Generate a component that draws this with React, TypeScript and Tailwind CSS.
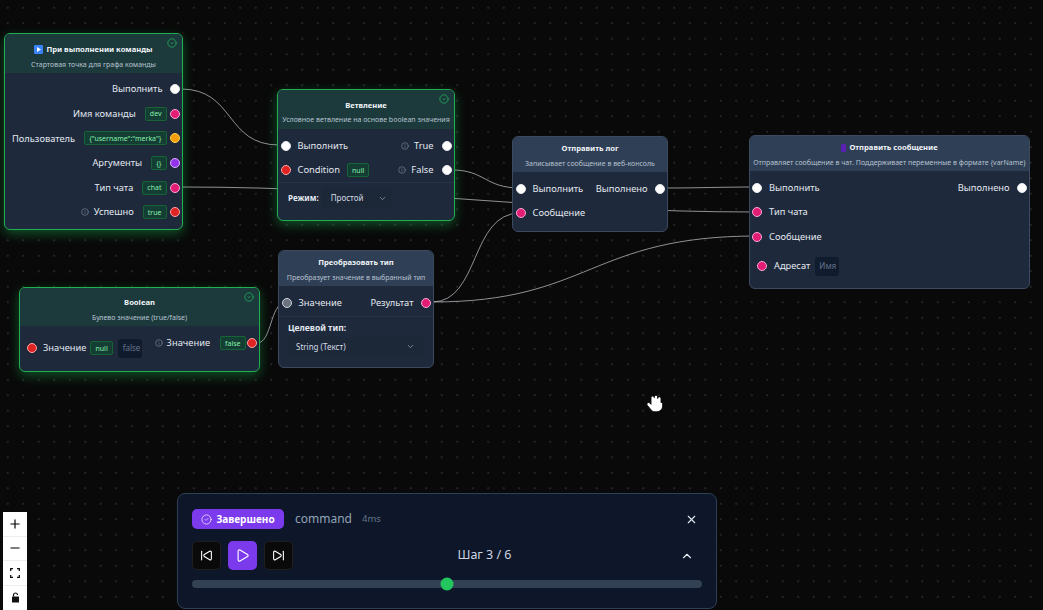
import React from 'react';
import { ChevronDown, ChevronUp, CircleCheck, Info, Minus, Play, Plus, SkipBack, SkipForward, X } from 'lucide-react';

const WHITE = 'bg-white border-[#e5e7eb]';
const PINK = 'bg-[#e11d74] border-[#f9a8d4]';
const RED = 'bg-[#e02424] border-[#fca5a5]';
const ORANGE = 'bg-[#f59e0b] border-[#fcd34d]';
const PURPLE = 'bg-[#9333ea] border-[#d8b4fe]';
const GRAY = 'bg-[#6b7280] border-[#d1d5db]';

const Dot = ({ color }: { color: string }) => (
    <span className={`block w-[10px] h-[10px] rounded-full border shrink-0 ${color}`} />
);

const Pill = ({ children }: { children: React.ReactNode }) => (
    <span className="flex items-center h-[14px] px-[4px] rounded-[2px] bg-[#143d33] border border-[#166534] text-[#86efac] text-[7px] leading-none whitespace-nowrap">
        {children}
    </span>
);

const Tip = () => <Info size={8} strokeWidth={1.5} className="text-[#94a3b8] shrink-0" />;

const Header = ({ title, desc, icon, success, h }: { title: string; desc: string; icon?: React.ReactNode; success?: boolean; h: string }) => (
    <div className={`relative flex flex-col items-center justify-center gap-[7px] rounded-t-[5px] ${h} ${success ? 'bg-[#1c3a3c]' : 'bg-[#2f3f55]'}`}>
        {success && <CircleCheck size={10} strokeWidth={1.6} className="absolute right-[5px] top-[4px] text-[#22c55e]" />}
        <div className="flex items-center gap-[3px] text-[7.6px] leading-none font-bold text-[#f1f5f9] whitespace-nowrap">
            {icon}
            {title}
        </div>
        <div className="text-[7px] leading-none text-[#b6c2d1] whitespace-nowrap">{desc}</div>
    </div>
);

const Node = ({ pos, success, children }: { pos: string; success?: boolean; children: React.ReactNode }) => (
    <div className={`absolute rounded-md bg-[#1e293b] border ${pos} ${success ? 'border-[#1fb052] shadow-[0_4px_12px_rgba(34,197,94,0.38)]' : 'border-[#3b4a5f]'}`}>
        {children}
    </div>
);

const Row = ({ className = '', children }: { className?: string; children: React.ReactNode }) => (
    <div className={`flex items-center h-[24.6px] text-[9.3px] text-[#e2e8f0] whitespace-nowrap ${className}`}>{children}</div>
);

const Edges = () => (
    <svg className="absolute inset-0 w-full h-full" viewBox="0 0 1043 610" fill="none" stroke="#c7ccd3" strokeWidth="0.7">
        <path d="M181 89 C 235 89, 225 145, 279 145" />
        <path d="M181 187 C 400 187, 540 212, 757 212" />
        <path d="M452 170 C 485 170, 485 188, 520 188" />
        <path d="M665 188 C 700 188, 720 187, 757 187" />
        <path d="M432 302 C 480 302, 470 213, 520 213" />
        <path d="M432 302 C 590 302, 590 236, 757 236" />
        <path d="M257 343 C 272 343, 270 303, 285 303" />
    </svg>
);

export default function App() {
    return (
        <div className="relative w-[1043px] h-[610px] overflow-hidden bg-[#090909] bg-[radial-gradient(#262626_0.7px,transparent_0.7px)] bg-[size:15.5px_15.5px] font-['Noto_Sans',sans-serif]">
            <Edges />

            {/* Start node */}
            <Node pos="left-[4px] top-[33px] w-[179px] h-[197px]" success>
                <Header
                    h="h-[39px] pt-[6px]"
                    success
                    title="При выполнении команды"
                    desc="Стартовая точка для графа команды"
                    icon={
                        <svg width="9" height="9" viewBox="0 0 9 9">
                            <rect width="9" height="9" rx="1" fill="#3b82f6" />
                            <path d="M3 2 L7 4.5 L3 7 Z" fill="#fff" />
                        </svg>
                    }
                />
                <div className="pt-[4px] pr-[2.5px] flex flex-col items-end">
                    <Row className="gap-[7px]">Выполнить <Dot color={WHITE} /></Row>
                    <Row className="gap-[3px]"><span className="mr-[6px]">Имя команды</span><Pill>dev</Pill><Dot color={PINK} /></Row>
                    <Row className="gap-[3px]"><span className="mr-[6px]">Пользователь</span><Pill>{'{"username":"merka"}'}</Pill><Dot color={ORANGE} /></Row>
                    <Row className="gap-[3px]"><span className="mr-[6px]">Аргументы</span><Pill>{'{}'}</Pill><Dot color={PURPLE} /></Row>
                    <Row className="gap-[3px]"><span className="mr-[6px]">Тип чата</span><Pill>chat</Pill><Dot color={PINK} /></Row>
                    <Row className="gap-[3px]"><Tip /><span className="ml-[2px] mr-[6px]">Успешно</span><Pill>true</Pill><Dot color={RED} /></Row>
                </div>
            </Node>

            {/* Branch node */}
            <Node pos="left-[277px] top-[89px] w-[178px] h-[132px]" success>
                <Header h="h-[39px] pt-[6px]" success title="Ветвление" desc="Условное ветвление на основе boolean значения" />
                <div className="pt-[4.5px] px-[2.5px]">
                    <Row className="justify-between">
                        <span className="flex items-center gap-[7px]"><Dot color={WHITE} />Выполнить</span>
                        <span className="flex items-center gap-[5px]"><Tip /><span className="mr-[3px]">True</span><Dot color={WHITE} /></span>
                    </Row>
                    <Row className="justify-between">
                        <span className="flex items-center gap-[7px]"><Dot color={RED} />Condition<Pill>null</Pill></span>
                        <span className="flex items-center gap-[5px]"><Tip /><span className="mr-[3px]">False</span><Dot color={WHITE} /></span>
                    </Row>
                </div>
                <div className="mt-[-1px] border-t border-[#26344a] flex items-center h-[32px] pl-[10px] text-[8px]">
                    <span className="font-bold text-[#e2e8f0]">Режим:</span>
                    <span className="ml-[3px] flex items-center w-[70px] h-[20px] pl-[9px] pr-[5px] justify-between text-[#d5dce6] rounded-[2px] bg-[#1c2738]">
                        Простой <ChevronDown size={9} className="text-[#94a3b8]" />
                    </span>
                </div>
            </Node>

            {/* Log node */}
            <Node pos="left-[512px] top-[136px] w-[156px] h-[96px]">
                <Header h="h-[35px] pt-[3px]" title="Отправить лог" desc="Записывает сообщение в веб-консоль" />
                <div className="pt-[4.5px] px-[2.5px]">
                    <Row className="justify-between">
                        <span className="flex items-center gap-[7px]"><Dot color={WHITE} />Выполнить</span>
                        <span className="flex items-center gap-[7px]">Выполнено<Dot color={WHITE} /></span>
                    </Row>
                    <Row className="gap-[7px]"><Dot color={PINK} />Сообщение</Row>
                </div>
            </Node>

            {/* Send message node */}
            <Node pos="left-[749px] top-[135px] w-[281px] h-[154px]">
                <Header
                    h="h-[35px] pt-[3px]"
                    title="Отправить сообщение"
                    desc="Отправляет сообщение в чат. Поддерживает переменные в формате {varName}"
                    icon={<span className="block w-[5px] h-[8px] rounded-[1.5px] bg-[#5b21b6]" />}
                />
                <div className="pt-[4.5px] pl-[2px] pr-[2.5px]">
                    <Row className="justify-between">
                        <span className="flex items-center gap-[7px]"><Dot color={WHITE} />Выполнить</span>
                        <span className="flex items-center gap-[7px]">Выполнено<Dot color={WHITE} /></span>
                    </Row>
                    <Row className="gap-[7px]"><Dot color={PINK} />Тип чата</Row>
                    <Row className="gap-[7px]"><Dot color={PINK} />Сообщение</Row>
                    <div className="flex items-center gap-[7px] mt-[7px] pl-[5px] h-[20px] text-[9.3px] text-[#e2e8f0]">
                        <Dot color={PINK} />Адресат
                        <span className="flex items-center w-[24px] h-[19px] ml-[-2px] pl-[4px] rounded-[3px] bg-[#111b2e] text-[8px] text-[#64748b] overflow-hidden">Имя</span>
                    </div>
                </div>
            </Node>

            {/* Boolean node */}
            <Node pos="left-[19px] top-[287px] w-[241px] h-[85px]" success>
                <Header h="h-[38px] pt-[6px]" success title="Boolean" desc="Булево значение (true/false)" />
                <div className="flex items-start justify-between pl-[7px] pr-[2.5px] pt-[9px] text-[9.3px] text-[#e2e8f0]">
                    <div className="flex items-center gap-[4px] h-[20px] mt-[3px]">
                        <Dot color={RED} />
                        <span className="ml-[2px]">Значение</span>
                        <Pill>null</Pill>
                        <span className="flex items-center w-[24px] h-[19px] ml-[1px] pl-[5px] rounded-[3px] bg-[#111b2e] text-[8px] text-[#64748b] overflow-hidden">false</span>
                    </div>
                    <div className="flex items-center h-[20px] mt-[-2px]">
                        <Tip />
                        <span className="ml-[4px] mr-[10px]">Значение</span>
                        <Pill>false</Pill>
                        <span className="ml-[1px]"><Dot color={RED} /></span>
                    </div>
                </div>
            </Node>

            {/* Convert node */}
            <Node pos="left-[278px] top-[250px] w-[156px] h-[118px]">
                <Header h="h-[35px] pt-[3px]" title="Преобразовать тип" desc="Преобразует значение в выбранный тип" />
                <div className="pt-[4.5px] px-[2.5px]">
                    <Row className="justify-between">
                        <span className="flex items-center gap-[7px]"><Dot color={GRAY} />Значение</span>
                        <span className="flex items-center gap-[7px]">Результат<Dot color={PINK} /></span>
                    </Row>
                </div>
                <div className="mt-[1px] border-t border-[#26344a] px-[9px] pt-[7px]">
                    <div className="text-[8.5px] leading-none font-bold text-[#e2e8f0]">Целевой тип:</div>
                    <div className="mt-[4px] flex items-center justify-between h-[20px] pl-[8px] pr-[9px] rounded-[2px] bg-[#1c2738] text-[8px] text-[#d5dce6]">
                        String (Текст) <ChevronDown size={9} className="text-[#94a3b8]" />
                    </div>
                </div>
            </Node>

            {/* Cursor */}
            <svg className="absolute left-[646px] top-[393px]" width="20" height="21" viewBox="0 0 24 24" fill="#fff" stroke="#000" strokeWidth="1" strokeLinejoin="round">
                <path d="M18 11V6a2 2 0 0 0-4 0V4a2 2 0 0 0-4 0v1a2 2 0 0 0-4 0v8l-1.8-1.8a2 2 0 0 0-2.8 2.8l3.6 4.2A7 7 0 0 0 9.5 22H13a7 7 0 0 0 7-7v-4a2 2 0 0 0-2 0z" />
            </svg>

            {/* Zoom controls */}
            <div className="absolute left-[3px] bottom-0 w-[24px] flex flex-col bg-white text-black">
                <div className="flex items-center justify-center h-[24.5px] border-b border-[#eee]"><Plus size={14} strokeWidth={2} /></div>
                <div className="flex items-center justify-center h-[24.5px] border-b border-[#eee]"><Minus size={14} strokeWidth={2} /></div>
                <div className="flex items-center justify-center h-[24.5px] border-b border-[#eee]">
                    <svg width="10" height="10" viewBox="0 0 10 10" fill="none" stroke="#111" strokeWidth="1.3">
                        <path d="M0.7 3V0.7H3M7 0.7H9.3V3M9.3 7V9.3H7M3 9.3H0.7V7" />
                    </svg>
                </div>
                <div className="flex items-center justify-center h-[24.5px]">
                    <svg width="9" height="11" viewBox="0 0 9 11">
                        <rect x="1" y="4.5" width="7" height="6" rx="0.5" fill="#111" />
                        <path d="M2.5 4.5V3a2 2 0 0 1 4 0" fill="none" stroke="#111" strokeWidth="1.2" />
                    </svg>
                </div>
            </div>

            {/* Debug panel */}
            <div className="absolute left-[177px] top-[493px] w-[540px] h-[116px] rounded-lg bg-[#0d1729] border border-[#2f3f55] px-[14px] pt-[15px]">
                <div className="flex items-center h-[20px]">
                    <span className="flex items-center gap-[4px] h-[20px] w-[92px] justify-center rounded-[5px] bg-[#7c3aed] text-white text-[10px] font-bold">
                        <CircleCheck size={11} strokeWidth={1.5} />
                        Завершено
                    </span>
                    <span className="ml-[11px] text-[12px] text-[#94a3b8]">command</span>
                    <span className="ml-[10px] text-[9.5px] text-[#64748b]">4ms</span>
                    <X size={13} strokeWidth={2} className="ml-auto mr-[4px] text-[#e2e8f0]" />
                </div>
                <div className="flex items-center mt-[12px] h-[29px]">
                    <span className="flex items-center justify-center w-[29px] h-[29px] rounded-[5px] bg-[#0a0a0a] border border-[#1f1f1f] text-white"><SkipBack size={13} strokeWidth={2} /></span>
                    <span className="flex items-center justify-center w-[29px] h-[29px] ml-[7px] rounded-[5px] bg-[#7c3aed] text-white"><Play size={15} strokeWidth={1.8} /></span>
                    <span className="flex items-center justify-center w-[29px] h-[29px] ml-[7px] rounded-[5px] bg-[#0a0a0a] border border-[#1f1f1f] text-white"><SkipForward size={13} strokeWidth={2} /></span>
                    <span className="flex-1 mr-[4px] text-center text-[12.5px] text-[#cbd5e1]">Шаг 3 / 6</span>
                    <ChevronUp size={14} strokeWidth={2} className="mr-[8px] text-[#e2e8f0]" />
                </div>
                <div className="relative mt-[10px] h-[8px] rounded-full bg-[#334155]">
                    <span className="absolute left-1/2 top-1/2 -translate-x-1/2 -translate-y-1/2 w-[13px] h-[13px] rounded-full bg-[#22c55e]" />
                </div>
            </div>
        </div>
    );
}
